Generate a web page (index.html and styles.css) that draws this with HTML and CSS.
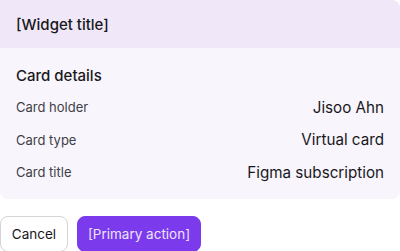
FILE: index.html
```html
<!DOCTYPE html>
<html>
<head>
<meta charset="utf-8">
<link rel="stylesheet" href="styles.css">
</head>
<body>
<div class="widget">
  <div class="card">
    <div class="card-header">[Widget title]</div>
    <div class="card-body">
      <div class="section-title">Card details</div>
      <div class="row"><span class="label">Card holder</span><span class="value">Jisoo Ahn</span></div>
      <div class="row"><span class="label">Card type</span><span class="value">Virtual card</span></div>
      <div class="row"><span class="label">Card title</span><span class="value">Figma subscription</span></div>
    </div>
  </div>
  <div class="actions">
    <button class="btn btn-secondary">Cancel</button>
    <button class="btn btn-primary">[Primary action]</button>
  </div>
</div>
</body>
</html>
```

FILE: styles.css
```css
* { box-sizing: border-box; }
html, body { margin: 0; padding: 0; background: #ffffff; }
body {
  font-family: Inter, "Noto Sans", sans-serif;
  color: #18181b;
  width: 400px;
  height: 251px;
  overflow: hidden;
}
.widget {
  display: flex;
  flex-direction: column;
  gap: 17px;
}
.card {
  background: #f8f5fd;
  border-radius: 0 8px 8px 8px;
  overflow: hidden;
}
.card-header {
  background: #f0e8f9;
  height: 48px;
  display: flex;
  align-items: center;
  padding: 0 16px;
  font-size: 15px;
  font-weight: 500;
}
.card-body {
  padding: 18px 16px 10px;
  display: flex;
  flex-direction: column;
}
.section-title {
  font-size: 15px;
  font-weight: 500;
  line-height: 20px;
  margin-bottom: 5px;
}
.row {
  display: flex;
  justify-content: space-between;
  align-items: center;
  height: 32.5px;
}
.label {
  font-size: 13px;
  color: #3f3f46;
}
.value {
  font-size: 15.2px;
  color: #18181b;
}
.actions {
  display: flex;
  gap: 9px;
}
.btn {
  height: 36px;
  border-radius: 8px;
  font-family: Inter, "Noto Sans", sans-serif;
  font-size: 13.5px;
  padding: 0;
  white-space: nowrap;
  cursor: pointer;
}
.btn-secondary {
  background: #ffffff;
  border: 1px solid #d4d4d8;
  color: #18181b;
  width: 68px;
}
.btn-primary {
  background: #7c3aed;
  border: 1px solid #7c3aed;
  color: #ede4fd;
  width: 124px;
}
```
